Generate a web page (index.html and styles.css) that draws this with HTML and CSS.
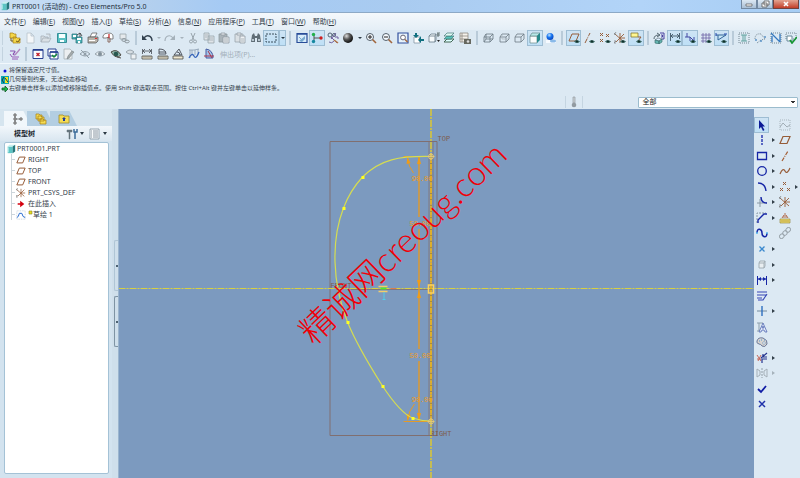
FILE: index.html
```html
<!DOCTYPE html>
<html lang="zh-CN">
<head>
<meta charset="utf-8">
<title>PRT0001 (活动的) - Creo Elements/Pro 5.0</title>
<link rel="stylesheet" href="styles.css">
</head>
<body>
<svg class="sprite" aria-hidden="true">
  <defs>
    <radialGradient id="ballDark" cx=".35" cy=".3" r=".7"><stop offset="0" stop-color="#ddd"/><stop offset=".5" stop-color="#555"/><stop offset="1" stop-color="#111"/></radialGradient>
    <radialGradient id="ballBlue" cx=".4" cy=".3" r=".7"><stop offset="0" stop-color="#bfe4ff"/><stop offset=".5" stop-color="#1674f0"/><stop offset="1" stop-color="#0847c0"/></radialGradient>
  </defs>
  <symbol id="part" viewBox="0 0 12 12"><path d="M2 3h6v8H2z" fill="#5cc4c4"/><path d="M2 3l2-2h7L8 3z" fill="#c9f1f0"/><path d="M8 3l3-2v8l-3 2z" fill="#25777c"/><path d="M2.500 4v6" stroke="#dff" /></symbol>
  <symbol id="folders" viewBox="0 0 12 12"><path d="M1 1h3l1 1h2v4H1zM4 5h3l1 1h3v5H4z" fill="#f3d64a" stroke="#a68012" stroke-width=".7"/><path d="M2 6v3h2M7 9l2 1 2-3" fill="none" stroke="#735a19"/></symbol>
  <symbol id="tabfolders" viewBox="0 0 12 12"><path d="M1 1h3l1 1h2v4H1zM3 3h3l1 1h2v4H3zM5 6h3l1 1h2v4H5z" fill="#f5dc54" stroke="#a68012" stroke-width=".7"/></symbol>
  <symbol id="new" viewBox="0 0 12 12"><path d="M3 1h4l3 3v7H3zM7 1v3h3" fill="#f4f7f9" stroke="#b8c3cb" stroke-width=".8"/></symbol>
  <symbol id="open" viewBox="0 0 12 12"><path d="M1 10V4h3l1 1h3v2M1 10l2-4h8l-2 4zM6 2h4v3" fill="#d9e0e5" stroke="#a4afb7" stroke-width=".8"/></symbol>
  <symbol id="save" viewBox="0 0 12 12"><path d="M1.500 1.500h9v9h-9z" fill="#59c2c3" stroke="#368f98"/><path d="M3 2h6v4H3zM4 8h4v2H4z" fill="#f6ffff"/></symbol>
  <symbol id="saveas" viewBox="0 0 12 12"><path d="M1 2h5v5H1zM5 5h6v6H5z" fill="#4eb4b8" stroke="#286d76" stroke-width=".7"/><path d="M2 3h3v2H2zM6 6h4v2H6zM7 9h2v2H7z" fill="#fff"/><path d="M6 3l3-2 2 3M9 1v4" stroke="#333" fill="none" stroke-width=".8"/></symbol>
  <symbol id="print" viewBox="0 0 12 12"><path d="M3 5l2-4h5L8 5z" fill="#fff" stroke="#555" stroke-width=".7"/><path d="M1 5h10v4l-2 2H1z" fill="#b7b2a9" stroke="#555" stroke-width=".7"/><path d="M2 8h6v1H2z" fill="#fff"/><path d="M8 6h2v1H8z" fill="#d33"/></symbol>
  <symbol id="mail" viewBox="0 0 12 12"><path d="M1 6V4q1-3 5-3 5 0 5 3v3H7V5L4 6z" fill="#fff" stroke="#666" stroke-width=".8"/><path d="M6 5v5h2V6" fill="none" stroke="#8b6d62"/><path d="M7 2v4" stroke="#c22" stroke-width="1.200"/></symbol>
  <symbol id="maillink" viewBox="0 0 12 12"><path d="M2 7V2h6v5z" fill="#e5e9ec" stroke="#9aa4ab" stroke-width=".8"/><ellipse cx="6" cy="8" rx="2.200" ry="1.400" fill="none" stroke="#8d979d"/><ellipse cx="9" cy="9.500" rx="2.200" ry="1.400" fill="none" stroke="#8d979d"/></symbol>
  <symbol id="undo" viewBox="0 0 12 12"><path d="M3 6q2-3 5-2t3 5" fill="none" stroke="#334250" stroke-width="1.400"/><path d="M1 3v5h5z" fill="#334250"/></symbol>
  <symbol id="redo" viewBox="0 0 12 12"><path d="M9 6Q7 3 4 4T1 9" fill="none" stroke="#a5b1ba" stroke-width="1.200"/><path d="M11 3v5H6z" fill="#a5b1ba"/></symbol>
  <symbol id="cut" viewBox="0 0 12 12"><path d="M4 1l3 7M8 1L5 8" stroke="#98a4ac"/><circle cx="4" cy="9.500" r="1.500" fill="none" stroke="#98a4ac"/><circle cx="8" cy="9.500" r="1.500" fill="none" stroke="#98a4ac"/></symbol>
  <symbol id="copy" viewBox="0 0 12 12"><path d="M1 1h5v7H1zM5 4h6v7H5z" fill="#dfe4e8" stroke="#98a4ac" stroke-width=".8"/><path d="M2 3h3M2 5h2M6 6h4M6 8h4" stroke="#98a4ac" stroke-width=".7"/></symbol>
  <symbol id="paste" viewBox="0 0 12 12"><path d="M1 2h8v8H1z" fill="#aab4ba" stroke="#8e999f" stroke-width=".8"/><path d="M3 1h4v2H3zM5 5h6v6H5z" fill="#e8ecee" stroke="#909ba2" stroke-width=".8"/><path d="M6 7h4M6 9h4" stroke="#909ba2" stroke-width=".7"/></symbol>
  <symbol id="pastespecial" viewBox="0 0 12 12"><path d="M1 2h8v8H1z" fill="#dae0e4" stroke="#9aa5ac" stroke-width=".8"/><path d="M3 1h4v2H3zM6 4h5v7H6z" fill="#eff2f4" stroke="#909ba2" stroke-width=".8"/><path d="M7 7h3M7 9h3" stroke="#909ba2" stroke-width=".7"/></symbol>
  <symbol id="find" viewBox="0 0 12 12"><path d="M2 3l2-2 1 3h2l1-3 2 2 1 7H7V6H5v4H1z" fill="#5f6d76"/><path d="M2 7h2v2H2zM8 7h2v2H8z" fill="#b8c6cf"/></symbol>
  <symbol id="box" viewBox="0 0 12 12"><path d="M1 2h10v8H1z" fill="none" stroke="#3b4f5c" stroke-dasharray="2 1"/></symbol>
  <symbol id="sketchview" viewBox="0 0 12 12"><path d="M1 1.500h10v9H1z" fill="#d8ecfa" stroke="#294d98" stroke-width="1.200"/><path d="M1 2h10" stroke="#294d98" stroke-width="1.500"/><path d="M3 9l6-5v3l-3 3z" fill="#78a9cf"/><path d="M3 5l2 2" stroke="#78a9cf"/></symbol>
  <symbol id="spin" viewBox="0 0 12 12"><path d="M3 3v6M3 6h7" stroke="#555"/><circle cx="2.500" cy="2.500" r="1.700" fill="#22b14c"/><circle cx="2.500" cy="9.500" r="1.700" fill="#1689a0"/><circle cx="10" cy="6" r="1.700" fill="#d02020"/></symbol>
  <symbol id="orient" viewBox="0 0 12 12"><circle cx="3" cy="3" r="2" fill="none" stroke="#536478"/><circle cx="7" cy="3" r="1.500" fill="none" stroke="#536478"/><path d="M4 5l6 6M9 1L4 7M2 10q3 2 5-1M8 5h3v2" fill="none" stroke="#7060a0"/><path d="M7 8l4 3" stroke="#b17547" stroke-width="1.500"/></symbol>
  <symbol id="ball" viewBox="0 0 12 12"><circle cx="6" cy="6" r="5" fill="url(#ballDark)"/></symbol>
  <symbol id="zoomin" viewBox="0 0 12 12"><circle cx="5" cy="5" r="3.500" fill="#f5faff" stroke="#53606b"/><path d="M3 5h4M5 3v4" stroke="#222"/><path d="M7.500 7.500L11 11" stroke="#a1653c" stroke-width="1.600"/></symbol>
  <symbol id="zoomout" viewBox="0 0 12 12"><circle cx="5" cy="5" r="3.500" fill="#f5faff" stroke="#53606b"/><path d="M3 5h4" stroke="#222"/><path d="M7.500 7.500L11 11" stroke="#a1653c" stroke-width="1.600"/></symbol>
  <symbol id="refit" viewBox="0 0 12 12"><path d="M1 1h10v10H1z" fill="#e8f3fb" stroke="#31509e" stroke-width="1.200"/><circle cx="6" cy="5.500" r="2.400" fill="#fff" stroke="#667"/><path d="M8 7.500l2.500 2.500" stroke="#a1653c" stroke-width="1.400"/></symbol>
  <symbol id="reorient" viewBox="0 0 12 12"><path d="M2 5h6v6H2z" fill="#fff" stroke="#768b99" stroke-width=".7"/><path d="M3 1h2v2h2L4 6 1 3h2zM12 7H9V4L6 8l3 3V9h3z" fill="#117080"/></symbol>
  <symbol id="views" viewBox="0 0 12 12"><path d="M1 4h6v6H1zM1 4l2-2h5v6L7 10M7 4l1-2" fill="#f6fbfd" stroke="#647985" stroke-width=".8"/><path d="M9 1h3M9 3h3M10 1v4" stroke="#455" stroke-width=".8"/><path d="M9 8h3l-1.500 2z" fill="#222"/></symbol>
  <symbol id="layers" viewBox="0 0 12 12"><path d="M1 10l3-3h7l-3 3z" fill="#dff" stroke="#465"/><path d="M1 7l3-3h7L8 7z" fill="#55c3bb" stroke="#477" stroke-width=".7"/><path d="M1 4l3-3h7L8 4z" fill="#dffaf6" stroke="#477" stroke-width=".7"/></symbol>
  <symbol id="camera" viewBox="0 0 12 12"><path d="M1 1h8v9H1zM1 4h8M1 7h8M3 1v9" fill="#f5f2ec" stroke="#8d8982" stroke-width=".8"/><path d="M5 7h7v5H5z" fill="#66685f"/><circle cx="9" cy="9.500" r="1.300" fill="#ddd"/></symbol>
  <symbol id="wire" viewBox="0 0 12 12"><path d="M2 5h6v5H2zM4 2h7v5H4zM2 5l2-3M8 5l3-3M8 10l3-3M2 10l2-3" fill="none" stroke="#687781" stroke-width=".8"/></symbol>
  <symbol id="hidden" viewBox="0 0 12 12"><path d="M2 5h6v5H2zM2 5l2-3h7v5l-3 3M8 5l3-3" fill="none" stroke="#6c7a83" stroke-width=".8"/><path d="M4 3v4h6" fill="none" stroke="#aeb9c0" stroke-width=".8"/></symbol>
  <symbol id="nohidden" viewBox="0 0 12 12"><path d="M2 5h6v5H2zM2 5l2-3h7v5l-3 3M8 5l3-3" fill="none" stroke="#6c7a83" stroke-width=".8"/></symbol>
  <symbol id="shade" viewBox="0 0 12 12"><path d="M1 4h7v7H1z" fill="#fafcfc" stroke="#688" stroke-width=".7"/><path d="M1 4l2-3h8L8 4z" fill="#b8e9e8" stroke="#688" stroke-width=".7"/><path d="M8 4l3-3v7l-3 3z" fill="#26898a"/></symbol>
  <symbol id="blueball" viewBox="0 0 12 12"><path d="M1 8h10v3H1z" fill="#f6faff"/><ellipse cx="8" cy="9" rx="3" ry="1.500" fill="#89b9e8"/><circle cx="5" cy="4.500" r="3.500" fill="url(#ballBlue)"/></symbol>
  <symbol id="eye" viewBox="0 0 12 12"><path d="M6 9.500q2.500-3 6 0-3 3-6 0z" fill="#37635e"/><circle cx="9" cy="9.500" r="1" fill="#102b28"/></symbol>
  <symbol id="plane" viewBox="0 0 12 12"><path d="M1 9.500l3-7h7l-3 7z" fill="none" stroke="#965c38" stroke-width="1.200"/></symbol>
  <symbol id="planeeye" viewBox="0 0 12 12"><path d="M1 9l3-7h7L8 9z" fill="none" stroke="#965c38"/><use href="#eye"/></symbol>
  <symbol id="axiseye" viewBox="0 0 12 12"><path d="M2 11L7 1" stroke="#965c38" stroke-dasharray="5 1 1 1"/><use href="#eye"/></symbol>
  <symbol id="points" viewBox="0 0 12 12"><path d="M4 1l3 3M7 1L4 4M1 7l3 3M4 7l-3 3M8 7l3 3M11 7l-3 3" stroke="#965c38"/></symbol>
  <symbol id="pointseye" viewBox="0 0 12 12"><path d="M1 1l3 3M4 1L1 4M7 2l3 3M10 2L7 5M1 7l3 3M4 7l-3 3" stroke="#965c38"/><use href="#eye"/></symbol>
  <symbol id="csys" viewBox="0 0 12 12"><path d="M6 1v10M1 2l9 8M10 2L2 10M5 6h6" stroke="#965c38" stroke-width=".9"/><path d="M0 1l2 2M2 0L0 3M0 9h2l-2 2h2" fill="none" stroke="#777" stroke-width=".7"/></symbol>
  <symbol id="csyseye" viewBox="0 0 12 12"><use href="#csys"/><use href="#eye"/></symbol>
  <symbol id="noteeye" viewBox="0 0 12 12"><path d="M1 1h7v4H1z" fill="#fff791" stroke="#867a30" stroke-width=".8"/><path d="M8 5h3L8 9" fill="none" stroke="#965c38"/><use href="#eye"/></symbol>
  <symbol id="sketchorient" viewBox="0 0 12 12"><path d="M7 1h4v6H9M8 3h1.500v2H8" fill="none" stroke="#4b43a0"/><path d="M1 7q0-4 5-4M4 1l3 2-3 2" fill="none" stroke="#52646f"/><path d="M2 8l3-2 4 1-3 2z" fill="#def" stroke="#52646f" stroke-width=".6"/><path d="M2 8l4 1v3l-4-1zM6 9l3-2v3l-3 2z" fill="#65b6b2" stroke="#366" stroke-width=".6"/></symbol>
  <symbol id="dimeye" viewBox="0 0 12 12"><path d="M1.500 1v8M10.500 1v6M2 4h8M4 2L2 4l2 2M8 2l2 2-2 2" fill="none" stroke="#415768" stroke-width=".9"/><use href="#eye"/></symbol>
  <symbol id="conseye" viewBox="0 0 12 12"><path d="M3 1v4M1 5h5M6 9V5l4 4V5" fill="none" stroke="#4348a2"/><use href="#eye"/></symbol>
  <symbol id="grideye" viewBox="0 0 12 12"><path d="M3 1v10M6 1v10M9 1v7M1 3h10M1 6h10M1 9h5" stroke="#6c62a4" stroke-width=".8"/><use href="#eye"/></symbol>
  <symbol id="verteye" viewBox="0 0 12 12"><path d="M1 3h10L3 8V3" fill="#c9e8f6" stroke="#35659a"/><path d="M1 1v3M9 2h3" stroke="#2244aa"/><use href="#eye"/></symbol>
  <symbol id="shadeloop" viewBox="0 0 12 12"><path d="M1 1h10v10H1z" fill="none" stroke="#758792" stroke-dasharray="1 1"/><path d="M3 3h6M3 9h6M5 3v6M7 3v6" stroke="#62a4a1"/></symbol>
  <symbol id="openends" viewBox="0 0 12 12"><path d="M1 7q0-6 6-5l4 5M3 11l4-3 4-1" fill="none" stroke="#778892" stroke-dasharray="1 1"/><path d="M1 8h2M6 9h2M10 5h2" stroke="#5b92c8" stroke-width="1.600"/></symbol>
  <symbol id="overlap" viewBox="0 0 12 12"><path d="M1 1h10v10H1z" fill="none" stroke="#758792" stroke-dasharray="1 1"/><path d="M1 1l9 9M2 10V4M10 2v8" fill="none" stroke="#3478bf" stroke-width="1.300"/></symbol>
  <symbol id="featcheck" viewBox="0 0 12 12"><path d="M1 1h10v6H1z" fill="none" stroke="#758792" stroke-dasharray="1 1"/><path d="M2 4h5v5H2z" fill="#fff" stroke="#689"/><path d="M5 8l2 3 5-6" fill="none" stroke="#159632" stroke-width="1.700"/></symbol>
  <symbol id="sketcher" viewBox="0 0 12 12"><path d="M1 3h4q2 0 0 2t1 2" fill="none" stroke="#8a52b2" stroke-width="1.200"/><path d="M11 1L6 7" stroke="#b284bd" stroke-width="1.300"/><path d="M1 6l2 3h7M3 11h6" fill="none" stroke="#9a5bb8"/></symbol>
  <symbol id="winx" viewBox="0 0 12 12"><path d="M1 1.500h10v9H1z" fill="#f9fcff" stroke="#263f90"/><path d="M1 2h10" stroke="#263f90" stroke-width="1.600"/><path d="M4.500 5l3 3M7.500 5l-3 3" stroke="#c21f29" stroke-width="1.400"/></symbol>
  <symbol id="wincheck" viewBox="0 0 12 12"><path d="M1 1h8v7H1zM3 4h8v7H3z" fill="#fff" stroke="#263f90"/><path d="M3 4h8" stroke="#263f90" stroke-width="1.500"/><path d="M5 7l2 2 3-3" fill="none" stroke="#148d33" stroke-width="1.300"/></symbol>
  <symbol id="pagepen" viewBox="0 0 12 12"><path d="M1 1h6l2 2v8H1z" fill="#eceff1" stroke="#a6b0b5" stroke-width=".8"/><path d="M11 4L6 10l-2 1 1-3 4-5z" fill="#a5abac" stroke="#778185" stroke-width=".6"/></symbol>
  <symbol id="eyeoff" viewBox="0 0 12 12"><path d="M1 6q5-5 10 0-5 4-10 0z" fill="none" stroke="#919ea7"/><circle cx="6" cy="6" r="1.500" fill="#919ea7"/><path d="M2 2l8 8" stroke="#919ea7"/></symbol>
  <symbol id="eyegray" viewBox="0 0 12 12"><path d="M1 6q5-5 10 0-5 4-10 0z" fill="#e6edf1" stroke="#99a5ae"/><circle cx="6" cy="6" r="2" fill="#82909a"/></symbol>
  <symbol id="eyegreen" viewBox="0 0 12 12"><path d="M1 4q6-4 10 3-5 5-10-3z" fill="#8bb4a8" stroke="#514d46"/><circle cx="6" cy="6" r="2.300" fill="#28584f"/><path d="M7 9l4 1" stroke="#514d46"/></symbol>
  <symbol id="eyepage" viewBox="0 0 12 12"><path d="M1 4q4-4 8 0-4 4-8 0z" fill="#d7dee3" stroke="#9ba6ae"/><path d="M6 6h5v5H6z" fill="#edf1f3" stroke="#9ba6ae"/></symbol>
  <symbol id="ruler" viewBox="0 0 12 12"><path d="M1.500 1v5M10.500 1v5M2 3h8M4 1L2 3l2 2M8 1l2 2-2 2" fill="none" stroke="#454a52" stroke-width=".8"/><path d="M1 8h10v3H1z" fill="#eee7cf" stroke="#4b4b48" stroke-width=".8"/><path d="M3 8v2M5 8v2M7 8v2M9 8v2" stroke="#555" stroke-width=".6"/></symbol>
  <symbol id="rulerarc" viewBox="0 0 12 12"><path d="M2 6V1q7 0 7 5zM2 4h7" fill="none" stroke="#454a52" stroke-width=".9"/><path d="M1 8h10v3H1z" fill="#eee7cf" stroke="#4b4b48" stroke-width=".8"/><path d="M3 8v2M5 8v2M7 8v2M9 8v2" stroke="#555" stroke-width=".6"/></symbol>
  <symbol id="rulerang" viewBox="0 0 12 12"><path d="M2 7l5-6 3 6zM5 4q3 0 3 3" fill="none" stroke="#454a52" stroke-width=".9"/><path d="M1 8h10v3H1z" fill="#eee7cf" stroke="#4b4b48" stroke-width=".8"/></symbol>
  <symbol id="curvature" viewBox="0 0 12 12"><path d="M1 2h5l5-1M2 2v8M4 2v6M7 2v5M10 1v6" fill="none" stroke="#8295aa" stroke-width=".7"/><path d="M1 10q3-6 5-2t5-4" fill="none" stroke="#3564ba" stroke-width="1.300"/></symbol>
  <symbol id="section" viewBox="0 0 12 12"><path d="M3 10V1q7 1 7 9z" fill="#a3c3e8" stroke="#445ba0"/><path d="M1 8h10M5 3l4 7" stroke="#ac354d"/></symbol>
  <symbol id="therm" viewBox="0 0 12 12"><path d="M5 1h2v6h-2z" fill="#cbd1d5" stroke="#929ba1" stroke-width=".7"/><circle cx="6" cy="9" r="2.300" fill="#929ba1"/></symbol>
  <symbol id="treetab" viewBox="0 0 12 12"><path d="M3 2v8M3 6h5" stroke="#666" stroke-width=".8"/><path d="M2 1h2v2H2zM2 5h2v2H2zM2 9h2v2H2zM8 5h2v2H8z" fill="#fff" stroke="#444" stroke-width=".8"/></symbol>
  <symbol id="favtab" viewBox="0 0 12 12"><path d="M1 2h4l1 1h5v7H1z" fill="#f4dc55" stroke="#9f8b2b" stroke-width=".8"/><path d="M6 4l2 2H7v2H5V6H4z" fill="#213c9c"/></symbol>
  <symbol id="tools" viewBox="0 0 12 12"><path d="M1 2h5v2H1zM3 4h1v7H3z" fill="#66747c" stroke="#66747c" stroke-width=".5"/><path d="M8 1v3h3V1M9 4v7" fill="none" stroke="#3b6c9a" stroke-width="1.500"/></symbol>
  <symbol id="list" viewBox="0 0 12 12"><path d="M1 1h9v10H1z" fill="#f8fbfc" stroke="#81939f" stroke-width=".8"/><path d="M2 3h1M4 3h5M2 5h1M4 5h5M2 7h1M4 7h5M2 9h1M4 9h5" stroke="#71818e" stroke-width=".8"/></symbol>
  <symbol id="insert" viewBox="0 0 12 12"><path d="M2 5h3V2l5 4-5 4V7H2z" fill="#d4000e"/></symbol>
  <symbol id="sketchfeat" viewBox="0 0 12 12"><path d="M1 1h10v10H1z" fill="none" stroke="#9fb4c2" stroke-dasharray="1 1" stroke-width=".7"/><path d="M1 9q2 0 3-5l3 0q1 5 4 5" fill="none" stroke="#286cd0" stroke-width="1.200"/></symbol>
  <symbol id="select" viewBox="0 0 12 12"><path d="M3 1v9l2-2 2 4 1.500-1-2-3.500H9z" fill="#0b1a96"/></symbol>
  <symbol id="graysketch" viewBox="0 0 12 12"><path d="M1 1h10v10H1z" fill="none" stroke="#a8b5bd" stroke-dasharray="1 1"/><path d="M1 8l3-4 4 4 3-2" fill="none" stroke="#a1adb5"/></symbol>
  <symbol id="line" viewBox="0 0 12 12"><path d="M6 1v10" stroke="#2231ae" stroke-width="1.400" stroke-dasharray="3 1"/></symbol>
  <symbol id="rect" viewBox="0 0 12 12"><path d="M1.500 2.500h9v7h-9z" fill="none" stroke="#1626a6" stroke-width="1.300"/></symbol>
  <symbol id="circle" viewBox="0 0 12 12"><circle cx="6" cy="6" r="4.300" fill="none" stroke="#1626a6" stroke-width="1.300"/></symbol>
  <symbol id="arc" viewBox="0 0 12 12"><path d="M2 2q7 0 8 8" fill="none" stroke="#1626a6" stroke-width="1.400"/></symbol>
  <symbol id="fillet" viewBox="0 0 12 12"><path d="M1 7h10M4 3v8" stroke="#8998a4"/><path d="M5 1q0 6 6 6" fill="none" stroke="#1626a6" stroke-width="1.400"/></symbol>
  <symbol id="chamfer" viewBox="0 0 12 12"><path d="M1 11V1h9" fill="none" stroke="#8998a4" stroke-dasharray="2 1"/><path d="M2 11V8l6-6h3" fill="none" stroke="#1626a6" stroke-width="1.400"/></symbol>
  <symbol id="spline" viewBox="0 0 12 12"><path d="M1 6c0-6 5-4 5 0s5 6 5 0" fill="none" stroke="#1626a6" stroke-width="1.500"/><path d="M1 5v2M11 5v2" stroke="#55b6ed" stroke-width="1.500"/></symbol>
  <symbol id="point" viewBox="0 0 12 12"><path d="M3.500 3.500l5 5M8.500 3.500l-5 5" stroke="#3b89ce" stroke-width="1.300"/></symbol>
  <symbol id="useedge" viewBox="0 0 12 12"><path d="M3 4h5v5H3zM3 4l1-2h5v5L8 9M8 4l1-2" fill="#e9eef1" stroke="#9da9b1" stroke-width=".9"/></symbol>
  <symbol id="dim" viewBox="0 0 12 12"><path d="M1.500 2v9M10.500 2v9M2 5h8" stroke="#1626a6"/><path d="M2 5l3-2v4zM10 5L7 3v4z" fill="#1626a6"/></symbol>
  <symbol id="modify" viewBox="0 0 12 12"><path d="M1 2h10M1 5h10M1 8h5M11 4L7 10H2" fill="none" stroke="#3647b5" stroke-width="1.200"/></symbol>
  <symbol id="constrain" viewBox="0 0 12 12"><path d="M1 6h10" stroke="#758b9e"/><path d="M6 1v10" stroke="#2d6fbf" stroke-width="1.400"/></symbol>
  <symbol id="text" viewBox="0 0 12 12"><path d="M1 2h6M3 2v8M1 10h3" stroke="#8d9fac"/><path d="M3 11L7 2l4 9H9L8 9H6l-1 2zM6 7h2L7 5z" fill="#e4ebfa" stroke="#5369b3" stroke-width=".8"/></symbol>
  <symbol id="palette" viewBox="0 0 12 12"><path d="M1 5q1-4 6-3 5 2 4 6-2 4-5 2-1-2-3-2-3-1-2-3z" fill="#d8d5d1" stroke="#6a7899"/><circle cx="8" cy="7" r="1.300" fill="#fff" stroke="#6386a8" stroke-width=".6"/><path d="M3 5h1M5 4h1M8 4h1" stroke="#5597d2"/></symbol>
  <symbol id="trim" viewBox="0 0 12 12"><path d="M1 3l4 6M5 3L2 9M1 7h4" stroke="#c5685c"/><path d="M6 11V7h5M5 6l6-5M7 2v3h4" fill="none" stroke="#26358f" stroke-width="1.200"/></symbol>
  <symbol id="mirror" viewBox="0 0 12 12"><path d="M6 1v10" stroke="#939fa7" stroke-dasharray="2 1"/><path d="M1 2l3 2v4l-3 2zM11 2L8 4v4l3 2z" fill="none" stroke="#a4afb7"/></symbol>
  <symbol id="done" viewBox="0 0 12 12"><path d="M2 6l3 3 5-6" fill="none" stroke="#101ca5" stroke-width="1.800"/></symbol>
  <symbol id="quit" viewBox="0 0 12 12"><path d="M3 3l6 6M9 3L3 9" fill="none" stroke="#2032aa" stroke-width="1.500"/></symbol>
  <symbol id="axis" viewBox="0 0 12 12"><path d="M3 11L9 1" stroke="#a56038" stroke-width="1.200" stroke-dasharray="4 1 1 1"/></symbol>
  <symbol id="curve" viewBox="0 0 12 12"><path d="M1 9q3-7 5-3t5-3" fill="none" stroke="#965c38" stroke-width="1.200"/></symbol>
  <symbol id="stamp" viewBox="0 0 12 12"><path d="M1 7h10v4H1z" fill="#f2dc69" stroke="#9a8d49" stroke-width=".7"/><path d="M6 1v3M3 6l2-3M9 6L7 3M4 5h4" stroke="#b26c4d"/><path d="M3 8v2M5 8v2M7 8v2M9 8v2" stroke="#8d7c37" stroke-width=".6"/></symbol>
  <symbol id="link" viewBox="0 0 12 12"><g fill="none" stroke="#9aa5ac" transform="rotate(-45 6 6)"><rect x="-1" y="4" width="5" height="4" rx="2"/><rect x="3.500" y="4" width="5" height="4" rx="2"/><rect x="8" y="4" width="5" height="4" rx="2"/></g></symbol>
</svg>

<header class="titlebar">
  <svg class="ico"><use href="#part"/></svg>
  <h1>PRT0001 (活动的) - Creo Elements/Pro 5.0</h1>
  <div class="winbtns">
    <button aria-label="最小化"><svg viewBox="0 0 10 8"><path d="M2 4h6v2H2z" fill="#fff" stroke="#555" stroke-width=".7"/></svg></button>
    <button aria-label="还原"><svg viewBox="0 0 10 8"><path d="M4 1h5v4H4zM2 3h5v4H2z" fill="#fff" stroke="#555" stroke-width=".8"/></svg></button>
    <button class="close" aria-label="关闭"><svg viewBox="0 0 10 8"><path d="M3 2l4 4M7 2L3 6" stroke="#fff" stroke-width="1.600"/></svg></button>
  </div>
</header>

<nav class="menubar">
  <button>文件(<u>F</u>)</button><button>编辑(<u>E</u>)</button><button>视图(<u>V</u>)</button><button>插入(<u>I</u>)</button><button>草绘(<u>S</u>)</button><button>分析(<u>A</u>)</button><button>信息(<u>N</u>)</button><button>应用程序(<u>P</u>)</button><button>工具(<u>T</u>)</button><button>窗口(<u>W</u>)</button><button>帮助(<u>H</u>)</button>
</nav>

<section class="toolbars">
  <div class="toolbar">
    <button aria-label="工作目录"><svg class="ico"><use href="#folders"/></svg></button>
    <button aria-label="新建"><svg class="ico"><use href="#new"/></svg></button>
    <button aria-label="打开"><svg class="ico"><use href="#open"/></svg></button>
    <button aria-label="保存"><svg class="ico"><use href="#save"/></svg></button>
    <button aria-label="保存副本"><svg class="ico"><use href="#saveas"/></svg></button>
    <button aria-label="打印"><svg class="ico"><use href="#print"/></svg></button>
    <button aria-label="发送邮件"><svg class="ico"><use href="#mail"/></svg></button>
    <button aria-label="发送链接"><svg class="ico"><use href="#maillink"/></svg></button>
    <span class="sep"></span>
    <button aria-label="撤消"><svg class="ico"><use href="#undo"/></svg></button>
    <button class="drop dim" aria-label="撤消列表"></button>
    <button aria-label="重做"><svg class="ico"><use href="#redo"/></svg></button>
    <button class="drop dim" aria-label="重做列表"></button>
    <button aria-label="剪切"><svg class="ico"><use href="#cut"/></svg></button>
    <button aria-label="复制"><svg class="ico"><use href="#copy"/></svg></button>
    <button aria-label="粘贴"><svg class="ico"><use href="#paste"/></svg></button>
    <button aria-label="选择性粘贴"><svg class="ico"><use href="#pastespecial"/></svg></button>
    <button aria-label="查找"><svg class="ico"><use href="#find"/></svg></button>
    <button class="on" aria-label="框选"><svg class="ico"><use href="#box"/></svg></button>
    <button class="drop on" aria-label="框选方式"></button>
    <span class="sep"></span>
    <button aria-label="草绘视图"><svg class="ico"><use href="#sketchview"/></svg></button>
    <button class="on" aria-label="旋转中心"><svg class="ico"><use href="#spin"/></svg></button>
    <button aria-label="定向模式"><svg class="ico"><use href="#orient"/></svg></button>
    <button aria-label="外观库"><svg class="ico"><use href="#ball"/></svg></button>
    <button class="drop" aria-label="外观列表"></button>
    <button aria-label="放大"><svg class="ico"><use href="#zoomin"/></svg></button>
    <button aria-label="缩小"><svg class="ico"><use href="#zoomout"/></svg></button>
    <button aria-label="重新调整"><svg class="ico"><use href="#refit"/></svg></button>
    <button aria-label="重定向"><svg class="ico"><use href="#reorient"/></svg></button>
    <button aria-label="视图列表"><svg class="ico"><use href="#views"/></svg></button>
    <button aria-label="层"><svg class="ico"><use href="#layers"/></svg></button>
    <button aria-label="视图管理器"><svg class="ico"><use href="#camera"/></svg></button>
    <span class="sep"></span>
    <button aria-label="线框"><svg class="ico"><use href="#wire"/></svg></button>
    <button aria-label="隐藏线"><svg class="ico"><use href="#hidden"/></svg></button>
    <button aria-label="消隐"><svg class="ico"><use href="#nohidden"/></svg></button>
    <button class="on" aria-label="着色"><svg class="ico"><use href="#shade"/></svg></button>
    <button aria-label="增强的真实感"><svg class="ico"><use href="#blueball"/></svg></button>
    <span class="sep"></span>
    <button class="on" aria-label="平面显示"><svg class="ico"><use href="#planeeye"/></svg></button>
    <button aria-label="轴显示"><svg class="ico"><use href="#axiseye"/></svg></button>
    <button aria-label="点显示"><svg class="ico"><use href="#pointseye"/></svg></button>
    <button aria-label="坐标系显示"><svg class="ico"><use href="#csyseye"/></svg></button>
    <button class="on" aria-label="注释显示"><svg class="ico"><use href="#noteeye"/></svg></button>
    <span class="sep"></span>
    <button aria-label="定向草绘平面"><svg class="ico"><use href="#sketchorient"/></svg></button>
    <button class="on" aria-label="尺寸显示"><svg class="ico"><use href="#dimeye"/></svg></button>
    <button class="on" aria-label="约束显示"><svg class="ico"><use href="#conseye"/></svg></button>
    <button aria-label="栅格显示"><svg class="ico"><use href="#grideye"/></svg></button>
    <button class="on" aria-label="顶点显示"><svg class="ico"><use href="#verteye"/></svg></button>
    <span class="sep"></span>
    <button aria-label="着色封闭环"><svg class="ico"><use href="#shadeloop"/></svg></button>
    <button aria-label="加亮开放端点"><svg class="ico"><use href="#openends"/></svg></button>
    <button aria-label="重叠几何"><svg class="ico"><use href="#overlap"/></svg></button>
    <button aria-label="特征要求"><svg class="ico"><use href="#featcheck"/></svg></button>
  </div>
  <div class="toolbar">
    <button aria-label="草绘器"><svg class="ico"><use href="#sketcher"/></svg></button>
    <span class="sep"></span>
    <button aria-label="关闭窗口"><svg class="ico"><use href="#winx"/></svg></button>
    <button aria-label="激活窗口"><svg class="ico"><use href="#wincheck"/></svg></button>
    <button aria-label="编辑"><svg class="ico"><use href="#pagepen"/></svg></button>
    <button aria-label="隐藏"><svg class="ico"><use href="#eyeoff"/></svg></button>
    <button aria-label="取消隐藏"><svg class="ico"><use href="#eyegray"/></svg></button>
    <button aria-label="全部取消隐藏"><svg class="ico"><use href="#eyegreen"/></svg></button>
    <button aria-label="隐藏状态"><svg class="ico"><use href="#eyepage"/></svg></button>
    <button aria-label="测量距离"><svg class="ico"><use href="#ruler"/></svg></button>
    <button aria-label="测量半径"><svg class="ico"><use href="#rulerarc"/></svg></button>
    <button aria-label="测量角度"><svg class="ico"><use href="#rulerang"/></svg></button>
    <button aria-label="曲率"><svg class="ico"><use href="#curvature"/></svg></button>
    <button aria-label="截面"><svg class="ico"><use href="#section"/></svg></button>
    <button class="label" disabled>伸出项(P)...</button>
  </div>
</section>

<section class="messages">
  <p><svg class="mark" viewBox="0 0 8 8"><circle cx="4" cy="4" r="1.500" fill="#1111d8"/></svg>将保留选定尺寸值。</p>
  <p><svg class="mark" viewBox="0 0 8 8"><path d="M0 0h8v8H0z" fill="#10a7b2"/><path d="M4 1h3v6H4z" fill="#f5e51c"/><path d="M3 1L1 4l2 3M4 2l3 4" fill="none" stroke="#163d49"/></svg>几何受到约束，无法动态移动</p>
  <p><svg class="mark" viewBox="0 0 8 8"><path d="M1 3h3V1l3 3-3 3V5H1z" fill="#19bd49" stroke="#145d2a" stroke-width=".8"/></svg>右键单击样条以添加或移除插值点。使用 Shift 键选取点范围。按住 Ctrl+Alt 键并左键单击以延伸样条。</p>
</section>

<div class="filterbar">
  <span class="therm"><svg class="ico"><use href="#therm"/></svg></span>
  <select aria-label="过滤器"><option>全部</option></select>
</div>

<main class="work">
  <aside class="navigator">
    <div class="tabs">
      <button class="active" aria-label="模型树"><svg class="ico"><use href="#treetab"/></svg></button>
      <button aria-label="文件夹浏览器"><svg class="ico"><use href="#tabfolders"/></svg></button>
      <button aria-label="收藏夹"><svg class="ico"><use href="#favtab"/></svg></button>
    </div>
    <div class="treehead">
      <h2>模型树</h2>
      <button aria-label="设置"><svg class="ico"><use href="#tools"/></svg><i class="tri"></i></button>
      <button aria-label="显示"><svg class="ico"><use href="#list"/></svg><i class="tri"></i></button>
    </div>
    <div class="treebody">
      <div class="root"><svg class="ico"><use href="#part"/></svg>PRT0001.PRT</div>
      <ul>
        <li><svg class="ico"><use href="#plane"/></svg>RIGHT</li>
        <li><svg class="ico"><use href="#plane"/></svg>TOP</li>
        <li><svg class="ico"><use href="#plane"/></svg>FRONT</li>
        <li><svg class="ico"><use href="#csys"/></svg>PRT_CSYS_DEF</li>
        <li><svg class="ico"><use href="#insert"/></svg>在此插入</li>
        <li><svg class="ico"><use href="#sketchfeat"/></svg><svg class="spark" viewBox="0 0 5 5"><path d="M1 1h3v3H1z" fill="#e9df24" stroke="#8b8520" stroke-width=".6"/></svg>草绘 1</li>
      </ul>
    </div>
  </aside>
  <div class="sash"><button aria-label="展开浏览器"></button><button class="dark" aria-label="折叠导航器"></button></div>

  <div class="canvas">
    <svg viewBox="118 109 636 369" preserveAspectRatio="xMidYMin slice">
      <g fill="none" stroke="#806f70">
        <path d="M329.500 141.500h107v294h-107z"/>
        <path d="M350 289.500h80M428.500 142v293M432.500 142v293" stroke-width=".8"/>
      </g>
      <g class="cad tag"><text x="437" y="141">TOP</text><text x="330" y="288">FRONT</text><text x="430" y="436">RIGHT</text></g>
      <path d="M118 288.500h636" stroke="#d8d042" stroke-dasharray="7 1 2 1"/>
      <path d="M430.500 109v369" stroke="#e3cb28" stroke-dasharray="7 1 2 1" stroke-width="1.400"/>
      <g stroke="#e39a28" fill="none">
        <path d="M418.500 157v60M418.500 229v120M418.500 361v59" stroke-width="1.400"/>
        <path d="M403 156.500h27M403 421.500h27"/>
        <path d="M407 158q1 9 6 15M414 404q-6 7-7 16"/>
      </g>
      <path d="M418.500 156l-2 8h4zM418.500 288l-2-8h4zM418.500 290l-2 8h4zM418.500 421l-2-8h4zM407 157l-1 7 4-1zM407 421l-1-7 4 1z" fill="#ef9c18"/>
      <g class="cad value"><text x="411" y="181">90.00</text><text x="409" y="226">50.00</text><text x="409" y="358">50.00</text><text x="411" y="402">90.00</text></g>
      <path d="M430.500 157v264" stroke="#e8a91b" stroke-width="1.400"/>
      <path d="M430.500 157v264" stroke="#776d4d" stroke-dasharray="1 5"/>
      <path d="M430 156.500C399 156 380 159 362 177C351 189 346 200 343 208C331 239 331 282 347 322C355 342 370 367 382 386C392 401 402 414 412 418C418 420 423 421 430 421" fill="none" stroke="#d5dc52" stroke-width="1.200"/>
      <path d="M361 176h3v3h-3zM342 207h3v3h-3zM346 321h3v3h-3zM381 385h3v3h-3zM411 417h3v3h-3z" fill="#ffff20"/>
      <g fill="none" stroke="#e1c777"><circle cx="430.500" cy="156.500" r="2.500"/><path d="M427 156.500h7M430.500 153v7M427 421.500h7M430.500 418v7"/><circle cx="430.500" cy="421.500" r="2.500"/></g>
      <path d="M428 285h5v8h-5z" fill="none" stroke="#ffd15a" stroke-width="1.600"/>
      <path d="M378 286.500h9M378 291.500h9" stroke="#f2cd6a" stroke-width="1.400"/>
      <path d="M380 288.500h6" stroke="#54e828" stroke-width="2"/>
      <path d="M390 288.500h6" stroke="#d97c4c"/>
      <path d="M383.500 292v7M382 299.500h3" stroke="#53cde8"/>
      <text class="watermark" transform="translate(313 346) rotate(-44)">精诚网creoug.com</text>
    </svg>
  </div>

  <aside class="palette">
    <button class="on" aria-label="选取"><svg class="ico"><use href="#select"/></svg></button><i></i><button aria-label="草绘"><svg class="ico"><use href="#graysketch"/></svg></button><i></i>
    <button aria-label="线"><svg class="ico"><use href="#line"/></svg></button><i class="fly"></i><button aria-label="基准平面"><svg class="ico"><use href="#plane"/></svg></button><i></i>
    <button aria-label="矩形"><svg class="ico"><use href="#rect"/></svg></button><i class="fly"></i><button aria-label="基准轴"><svg class="ico"><use href="#axis"/></svg></button><i></i>
    <button aria-label="圆"><svg class="ico"><use href="#circle"/></svg></button><i class="fly"></i><button aria-label="基准曲线"><svg class="ico"><use href="#curve"/></svg></button><i></i>
    <button aria-label="弧"><svg class="ico"><use href="#arc"/></svg></button><i class="fly"></i><button aria-label="基准点"><svg class="ico"><use href="#points"/></svg></button><i class="fly"></i>
    <button aria-label="圆角"><svg class="ico"><use href="#fillet"/></svg></button><i class="fly"></i><button aria-label="坐标系"><svg class="ico"><use href="#csys"/></svg></button><i></i>
    <button aria-label="倒角"><svg class="ico"><use href="#chamfer"/></svg></button><i class="fly"></i><button aria-label="分析"><svg class="ico"><use href="#stamp"/></svg></button><i></i>
    <button aria-label="样条"><svg class="ico"><use href="#spline"/></svg></button><i></i><button aria-label="参照"><svg class="ico"><use href="#link"/></svg></button><i></i>
    <button aria-label="点"><svg class="ico"><use href="#point"/></svg></button><i class="fly"></i><i></i><i></i>
    <button aria-label="使用边"><svg class="ico"><use href="#useedge"/></svg></button><i class="fly"></i><i></i><i></i>
    <button aria-label="尺寸"><svg class="ico"><use href="#dim"/></svg></button><i class="fly"></i><i></i><i></i>
    <button aria-label="修改"><svg class="ico"><use href="#modify"/></svg></button><i></i><i></i><i></i>
    <button aria-label="约束"><svg class="ico"><use href="#constrain"/></svg></button><i class="fly"></i><i></i><i></i>
    <button aria-label="文本"><svg class="ico"><use href="#text"/></svg></button><i></i><i></i><i></i>
    <button aria-label="调色板"><svg class="ico"><use href="#palette"/></svg></button><i></i><i></i><i></i>
    <button aria-label="修剪"><svg class="ico"><use href="#trim"/></svg></button><i class="fly"></i><i></i><i></i>
    <button aria-label="镜像"><svg class="ico"><use href="#mirror"/></svg></button><i class="fly faint"></i><i></i><i></i>
    <button aria-label="完成"><svg class="ico"><use href="#done"/></svg></button><i></i><i></i><i></i>
    <button aria-label="退出"><svg class="ico"><use href="#quit"/></svg></button><i></i><i></i><i></i>
  </aside>
</main>
</body>
</html>
```
FILE: styles.css
```css
* { box-sizing: border-box; }

body {
  margin: 0;
  height: 100vh;
  display: flex;
  flex-direction: column;
  overflow: hidden;
  background: #dce9f3;
  color: #34404a;
  font: 7px/9px "Noto Sans", "Noto Sans CJK SC", sans-serif;
}

button {
  display: flex;
  align-items: center;
  justify-content: center;
  min-width: 0;
  margin: 0;
  padding: 0;
  border: 0;
  background: none;
  color: inherit;
  font: inherit;
}

h1, h2, p, ul { margin: 0; padding: 0; font: inherit; list-style: none; }

.sprite { position: absolute; width: 0; height: 0; }
.ico { width: 12px; height: 12px; flex: none; display: block; }

/* window frame */
.titlebar {
  display: flex;
  align-items: center;
  height: 13px;
  gap: 2px;
  border-bottom: 1px solid #8da9c6;
  background: linear-gradient(90deg, #c9dff5 0%, #b4d0ee 18%, #a5caf4 28%, #a9cbf0 50%, #b2d4f8 80%, #a7cdf4 100%);
}
.titlebar .ico { width: 10px; height: 10px; }
.titlebar h1 { color: #24303c; }
.winbtns { display: flex; align-self: flex-start; margin-left: auto; margin-right: 1px; }
.winbtns button {
  width: 16px;
  height: 9px;
  border: 1px solid #7389a1;
  border-top: 0;
  background: linear-gradient(#dce8f3, #a9bfd5);
}
.winbtns .close { width: 26px; border-color: #70423f; background: linear-gradient(#e3a391, #c23e29); }
.winbtns svg { width: 10px; height: 8px; }

.menubar {
  display: flex;
  align-items: center;
  gap: 7px;
  height: 17px;
  padding-left: 4px;
  background: linear-gradient(#f4f8fc, #e4eef6);
}
.menubar button { display: block; white-space: nowrap; }

/* toolbars */
.toolbars { border-bottom: 1px solid #f2f8fc; padding-bottom: 1px; }
.toolbar {
  display: flex;
  height: 16px;
  padding: 0 1px 0 7px;
  background: linear-gradient(#c3d3df, #c3d3df) 2px center / 1px 14px no-repeat;
}
.toolbar button { flex: 156 1 0; }
.toolbar .drop { flex-grow: 74; }
.toolbar .sep {
  flex: 74 1 0;
  background: linear-gradient(#b9cbd9, #b9cbd9) center / 2px 14px no-repeat;
}
.toolbar .on, .palette .on {
  background: linear-gradient(#cfe4f4, #bddff6);
  box-shadow: inset 0 0 0 1px #9ebdd3;
}
.drop::after, .tri {
  content: "";
  border: 2px solid transparent;
  border-top: 2px solid #2b3843;
  border-bottom: 0;
}
.drop.dim::after { border-top-color: #a6b2bb; }
.toolbar .label {
  flex: 5790 1 0;
  justify-content: flex-start;
  padding-left: 3px;
  color: #a3b0ba;
}

.messages { height: 31px; padding: 2px 0 0 1px; font-size: 6px; }
.messages p { display: flex; align-items: center; white-space: nowrap; }
.mark { width: 8px; height: 8px; flex: none; }

.filterbar {
  display: flex;
  align-items: center;
  justify-content: flex-end;
  gap: 55px;
  height: 14px;
  padding-right: 2px;
}
.therm {
  display: flex;
  justify-content: center;
  width: 18px;
  border: 1px solid #c5d5e1;
  border-width: 0 1px;
}
.filterbar select {
  width: 20%;
  height: 11px;
  padding: 0 3px;
  border: 1px solid #9bbccd;
  border-radius: 1px;
  appearance: none;
  background:
    linear-gradient(135deg, #333 50%, transparent 50%) right 2px center / 2px 3px no-repeat,
    linear-gradient(225deg, #333 50%, transparent 50%) right 4px center / 2px 3px no-repeat,
    #fff;
  color: #222;
  font: inherit;
  line-height: 8px;
}

/* work area */
.work { flex: 1; display: flex; min-height: 0; }

.navigator {
  width: 112px;
  display: flex;
  flex-direction: column;
  padding-bottom: 4px;
  background: #d3e3ef;
}
.tabs { display: flex; height: 17px; padding: 2px 0 0 4px; background: #d6e5ef; }
.tabs button {
  width: 27px;
  margin-right: -4px;
  background: #b3cee2;
  clip-path: polygon(0 0, 72% 0, 100% 100%, 0 100%);
}
.tabs .active { background: #f1f7fb; }
.treehead {
  display: flex;
  align-items: center;
  gap: 5px;
  height: 15px;
  padding: 0 5px 0 14px;
  background: linear-gradient(#f2f7fb, #d9e6f0);
}
.treehead h2 { margin-right: auto; font-weight: 700; color: #1b2630; }
.treehead button { gap: 2px; }
.tri { border-width: 3px 2px 0; }
.treebody {
  flex: 1;
  margin: 1px 3px 0 4px;
  padding: 0 1px;
  border: 1px solid #a4c2d6;
  border-radius: 2px;
  background: #fff;
}
.root, .treebody li { display: flex; align-items: center; gap: 1px; height: 11px; }
.root .ico, .treebody li .ico { width: 10px; height: 10px; }
.treebody ul { margin-left: 5px; border-left: 1px solid #ccd5db; }
.treebody li { gap: 2px; }
.treebody li::before { content: ""; width: 3px; margin-right: -1px; border-top: 1px solid #ccd5db; }
.treebody .spark { width: 5px; height: 5px; margin: 0 -2px 4px 0; }

.sash {
  width: 7px;
  display: flex;
  flex-direction: column;
  justify-content: center;
  align-items: flex-end;
  gap: 5px;
  background: #cfdfeb;
  border-right: 1px solid #9bb5cf;
}
.sash button { width: 4px; height: 51px; border: 1px solid #afc5d5; border-right: 0; border-radius: 2px 0 0 2px; }
.sash .dark { border-color: #7e93a3; }
.sash button::after { content: ""; width: 2px; height: 2px; background: #4d6272; }

.canvas { flex: 1; min-width: 0; position: relative; background: #7c9abf; overflow: hidden; }
.canvas svg { position: absolute; inset: 0; width: 100%; height: 100%; }
.cad { font: 7px "Liberation Mono", monospace; }
.tag { fill: #7c5a4c; }
.value { fill: #f09a20; }
.watermark { fill: #f00008; font: 300 34px Lato, "Noto Sans CJK SC", sans-serif; }

/* sketch tools */
.palette {
  width: 46px;
  display: grid;
  grid-template-columns: 15px 8px 15px 8px;
  grid-template-rows: repeat(19, 4fr) 17fr;
  padding-top: 8px;
}
.palette button { min-height: 0; }
.palette i { display: flex; align-items: center; justify-content: center; }
.fly::before {
  content: "";
  border: 2px solid transparent;
  border-left: 3px solid #34404a;
  border-right: 0;
}
.fly.faint::before { border-left-color: #a6b2bb; }
```
